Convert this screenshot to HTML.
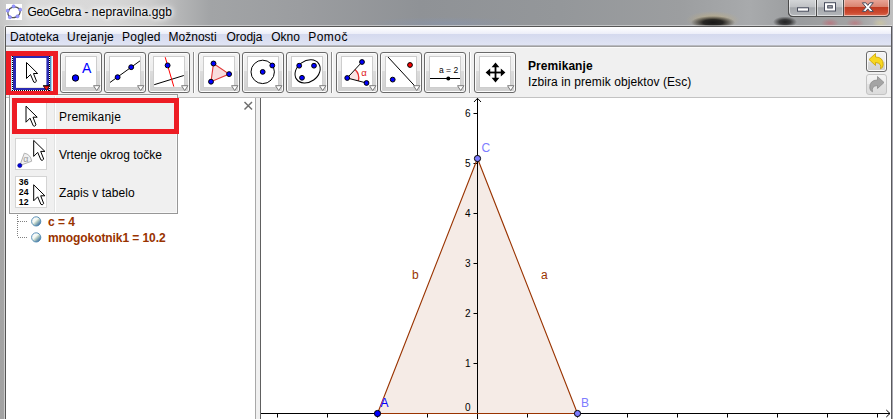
<!DOCTYPE html>
<html><head><meta charset="utf-8">
<style>
html,body{margin:0;padding:0;}
body{width:893px;height:419px;overflow:hidden;position:relative;background:#9a9c9e;font-family:"Liberation Sans",sans-serif;font-size:12px;color:#000;}
.abs{position:absolute;}
#title{left:0;top:0;width:893px;height:27px;background:
radial-gradient(ellipse 22px 6.5px at 713px 22.5px, rgba(16,16,16,0.95) 0, rgba(16,16,16,0.85) 45%, rgba(16,16,16,0) 100%),
radial-gradient(ellipse 27px 9px at 713px 20px, rgba(196,176,124,0.65) 0, rgba(196,176,124,0.4) 50%, rgba(196,176,124,0) 100%),
radial-gradient(ellipse 12px 5.5px at 785px 22px, rgba(24,24,24,0.92) 0, rgba(24,24,24,0.75) 45%, rgba(24,24,24,0) 100%),
radial-gradient(ellipse 9px 4.5px at 830px 23px, rgba(196,96,110,0.6) 0, rgba(196,96,110,0) 100%),
radial-gradient(ellipse 9px 4.5px at 855px 23px, rgba(200,100,110,0.55) 0, rgba(200,100,110,0) 100%),
radial-gradient(ellipse 8px 5px at 880px 23px, rgba(220,210,150,0.5) 0, rgba(220,210,150,0) 100%),
radial-gradient(ellipse 80px 6px at 445px 23px, rgba(130,150,190,0.35) 0, rgba(130,150,190,0) 100%),
linear-gradient(90deg,#c6c6c6 0px,#dadada 30px,#d8d8d8 110px,#cccccc 150px,#b4b5b6 180px,#a2a4a6 210px,#9b9da0 300px,#8f9296 420px,#94979a 560px,#9c9ea0 680px,#a8aaac 750px,#9a9c9e 800px,#a4a4a4 860px,#c0c0c0 893px);}
#titletxt{left:27.4px;top:4px;font-size:12px;line-height:16px;white-space:nowrap;color:#000;text-shadow:0 0 4px #fff,0 0 6px #fff,0 0 8px #fff;}
#lframe{left:0;top:26px;width:5px;height:393px;background:linear-gradient(90deg,rgba(0,0,0,0) 0,rgba(0,0,0,0) 3.6px,rgba(255,255,255,0.45) 4px,rgba(255,255,255,0.45) 5px),linear-gradient(180deg,#c4c4c4 0,#bcbcbc 40px,#b2b2b2 110px,#a6a6a6 220px,#a2a2a2 393px);}
#frameline{left:5px;top:26px;width:887px;height:393px;border:1px solid #555;border-bottom:none;border-radius:2px 2px 0 0;box-sizing:border-box;}
#menubar{left:6px;top:27px;width:885px;height:21px;background:linear-gradient(180deg,#ffffff 0px,#eceef9 7px,#d4d9ee 7px,#e0e4f4 18px,#c4c6d0 18px,#a0a0a0 19.5px,#f8f8f8 20px,#fdfdfd 21px);}
.mi{position:absolute;top:29px;line-height:16px;white-space:nowrap;}
#toolbar{left:6px;top:48px;width:885px;height:49px;background:#f0f0f0;}
#tbline{left:6px;top:97px;width:885px;height:1px;background:#c2c2c2;}
.tb{position:absolute;top:52px;width:40px;height:39px;border:1px solid #6a6a6a;border-radius:3px;background:linear-gradient(180deg,#f3f3f3 0,#ececec 46%,#dcdcdc 46%,#d0d0d0 100%);box-shadow:inset 0 0 0 1px #fcfcfc;}
.tb svg.ic{position:absolute;left:4px;top:3px;width:32px;height:32px;background:#fff;outline:1px solid #cdcdcd;outline-offset:-1px;}
.tb svg.dd{position:absolute;left:32px;top:32px;}
.sep{position:absolute;top:52px;width:1px;height:41px;background:#8c8c8c;box-shadow:1px 0 0 #fff;}
#stat1{left:528px;top:59px;font-weight:bold;letter-spacing:0.06px;line-height:14px;white-space:nowrap;}
#stat2{left:528px;top:75px;letter-spacing:0.085px;line-height:14px;white-space:nowrap;}
.ur{position:absolute;left:866px;width:19px;height:19px;border-radius:3px;}
#alg{left:6px;top:98px;width:249px;height:321px;background:#fff;}
#algr{left:255px;top:98px;width:1px;height:321px;background:#a8a8a8;}
#split{left:256px;top:98px;width:4px;height:321px;background:#f0f0f0;}
#splitd{left:260px;top:98px;width:1px;height:321px;background:#606060;}
#canvas{left:261px;top:98px;width:630px;height:321px;background:#fff;}
.tr{position:absolute;left:48px;font-weight:bold;color:#993300;line-height:14px;white-space:nowrap;}
#popup{left:9px;top:94px;width:167px;height:118px;background:#f0f0f0;border:1px solid #979797;box-shadow:inset 0 0 0 1px #f8f8f8;}
#gut{left:54px;top:96px;width:1px;height:116px;background:#e2e3e3;box-shadow:1px 0 0 #fff;}
.pic{position:absolute;left:15px;width:30px;height:30px;border:1px solid #d4d4d4;background:#fff;}
.ptx{position:absolute;left:59px;line-height:14px;white-space:nowrap;}
.red{position:absolute;border:5px solid #ed1c24;box-sizing:border-box;}
</style></head><body>
<div id="title" class="abs"></div>
<div id="lframe" class="abs"></div>
<div id="titletxt" class="abs"><span style="letter-spacing:-0.28px">GeoGebra</span> - <span style="letter-spacing:0.1px">nepravilna.ggb</span></div>

<svg class="abs" style="left:6px;top:4px" width="16" height="16" viewBox="0 0 16 16"><rect width="16" height="16" fill="#fff"/><ellipse cx="8" cy="8.3" rx="6.3" ry="5.2" transform="rotate(-20 8 8.3)" fill="none" stroke="#555" stroke-width="1.3"/><g fill="#9999ff" stroke="#6f6fe0" stroke-width="0.5"><circle cx="7.6" cy="2.4" r="1.6"/><circle cx="14.2" cy="5.7" r="1.6"/><circle cx="11.5" cy="12.3" r="1.6"/><circle cx="3.9" cy="13.2" r="1.6"/><circle cx="1.7" cy="6.7" r="1.6"/></g></svg>
<svg class="abs" style="left:786px;top:0" width="106" height="19" viewBox="0 0 106 19">
<defs>
<linearGradient id="wg" x1="0" y1="0" x2="0" y2="1"><stop offset="0" stop-color="#d6d8da"/><stop offset="0.45" stop-color="#c0c2c5"/><stop offset="0.5" stop-color="#a4a7ab"/><stop offset="1" stop-color="#b4b7bb"/></linearGradient>
<linearGradient id="wr" x1="0" y1="0" x2="0" y2="1"><stop offset="0" stop-color="#eaa99b"/><stop offset="0.45" stop-color="#da8470"/><stop offset="0.5" stop-color="#c03a20"/><stop offset="0.8" stop-color="#cc4a30"/><stop offset="1" stop-color="#da6c52"/></linearGradient>
</defs>
<path d="M2.5,-1 L2.5,12 Q2.5,16.5 7,16.5 L99,16.5 Q103.5,16.5 103.5,12 L103.5,-1 Z" fill="url(#wg)" stroke="#4a4a4a" stroke-width="1"/>
<path d="M57.5,-1 L57.5,16 L99,16 Q103,16 103,12 L103,-1 Z" fill="url(#wr)"/>
<path d="M2.5,-1 L2.5,12 Q2.5,16.5 7,16.5 L99,16.5 Q103.5,16.5 103.5,12 L103.5,-1" fill="none" stroke="#4a4a4a" stroke-width="1"/>
<path d="M3.5,0 L3.5,12 Q3.5,15.5 7,15.5 L99,15.5 Q102.5,15.5 102.5,12 L102.5,0" fill="none" stroke="rgba(255,255,255,0.55)" stroke-width="1"/>
<line x1="30.5" y1="0" x2="30.5" y2="16" stroke="#4a4a4a"/><line x1="57.5" y1="0" x2="57.5" y2="16" stroke="#4a4a4a"/>
<line x1="29.5" y1="0" x2="29.5" y2="15" stroke="rgba(255,255,255,0.5)"/><line x1="31.5" y1="0" x2="31.5" y2="15" stroke="rgba(255,255,255,0.5)"/><line x1="56.5" y1="0" x2="56.5" y2="15" stroke="rgba(255,255,255,0.5)"/><line x1="58.5" y1="0" x2="58.5" y2="15" stroke="rgba(255,255,255,0.4)"/>
<rect x="11.5" y="7.8" width="11" height="3.4" fill="#fff" stroke="#484c5c" stroke-width="1"/>
<rect x="38.5" y="2.7" width="11" height="8.3" fill="#fff" stroke="#484c5c" stroke-width="1"/><rect x="41.7" y="5.7" width="4.6" height="2.3" fill="#b0b2b6" stroke="#484c5c" stroke-width="1"/>
<path d="M76.3,2.8 L79.8,2.8 L81.8,5.4 L83.8,2.8 L87.3,2.8 L83.6,7.2 L87.3,11.4 L83.8,11.4 L81.8,8.9 L79.8,11.4 L76.3,11.4 L80,7.2 Z" fill="#fff" stroke="#484c5c" stroke-width="1"/>
</svg>
<div class="abs" style="left:5px;top:25px;width:887px;height:1px;background:rgba(255,255,255,0.42)"></div><div id="frameline" class="abs"></div>
<div id="menubar" class="abs"></div>
<div class="mi" style="left:10px;letter-spacing:0.13px">Datoteka</div>
<div class="mi" style="left:67px;letter-spacing:0.3px">Urejanje</div>
<div class="mi" style="left:122px;letter-spacing:0.23px">Pogled</div>
<div class="mi" style="left:168.6px;letter-spacing:0px">Možnosti</div>
<div class="mi" style="left:226.4px;letter-spacing:0px">Orodja</div>
<div class="mi" style="left:271.2px;letter-spacing:0px">Okno</div>
<div class="mi" style="left:308.2px;letter-spacing:0.5px">Pomoč</div>
<div id="toolbar" class="abs"></div><div id="tbline" class="abs"></div>
<svg class="abs" style="left:0;top:48px" width="64" height="50" viewBox="0 48 64 50" shape-rendering="crispEdges"><rect x="11" y="52" width="42" height="41" fill="#b4e0f6"/><rect x="50" y="52" width="1" height="41" fill="#4a90c4"/><rect x="51" y="52" width="1" height="41" fill="#a4d0ea"/><rect x="52" y="52" width="1" height="41" fill="#f2f8fc"/><rect x="13" y="54" width="36" height="36" fill="#2a2ab2"/><rect x="16" y="58" width="30.4" height="30" fill="#fff" shape-rendering="auto"/><rect x="16" y="87" width="30" height="1" fill="#ece6dc"/><rect x="12" y="54" width="1" height="1" fill="#000"/><rect x="12" y="55" width="1" height="1" fill="#fff"/><rect x="12" y="56" width="1" height="1" fill="#000"/><rect x="12" y="57" width="1" height="1" fill="#fff"/><rect x="12" y="58" width="1" height="1" fill="#000"/><rect x="12" y="59" width="1" height="1" fill="#fff"/><rect x="12" y="60" width="1" height="1" fill="#000"/><rect x="12" y="61" width="1" height="1" fill="#fff"/><rect x="12" y="62" width="1" height="1" fill="#000"/><rect x="12" y="63" width="1" height="1" fill="#fff"/><rect x="12" y="64" width="1" height="1" fill="#000"/><rect x="12" y="65" width="1" height="1" fill="#fff"/><rect x="12" y="66" width="1" height="1" fill="#000"/><rect x="12" y="67" width="1" height="1" fill="#fff"/><rect x="12" y="68" width="1" height="1" fill="#000"/><rect x="12" y="69" width="1" height="1" fill="#fff"/><rect x="12" y="70" width="1" height="1" fill="#000"/><rect x="12" y="71" width="1" height="1" fill="#fff"/><rect x="12" y="72" width="1" height="1" fill="#000"/><rect x="12" y="73" width="1" height="1" fill="#fff"/><rect x="12" y="74" width="1" height="1" fill="#000"/><rect x="12" y="75" width="1" height="1" fill="#fff"/><rect x="12" y="76" width="1" height="1" fill="#000"/><rect x="12" y="77" width="1" height="1" fill="#fff"/><rect x="12" y="78" width="1" height="1" fill="#000"/><rect x="12" y="79" width="1" height="1" fill="#fff"/><rect x="12" y="80" width="1" height="1" fill="#000"/><rect x="12" y="81" width="1" height="1" fill="#fff"/><rect x="12" y="82" width="1" height="1" fill="#000"/><rect x="12" y="83" width="1" height="1" fill="#fff"/><rect x="12" y="84" width="1" height="1" fill="#000"/><rect x="12" y="85" width="1" height="1" fill="#fff"/><rect x="12" y="86" width="1" height="1" fill="#000"/><rect x="12" y="87" width="1" height="1" fill="#fff"/><rect x="12" y="88" width="1" height="1" fill="#000"/><rect x="12" y="89" width="1" height="1" fill="#fff"/><rect x="12" y="90" width="1" height="1" fill="#000"/><rect x="49" y="54" width="1" height="1" fill="#000"/><rect x="49" y="55" width="1" height="1" fill="#fff"/><rect x="49" y="56" width="1" height="1" fill="#000"/><rect x="49" y="57" width="1" height="1" fill="#fff"/><rect x="49" y="58" width="1" height="1" fill="#000"/><rect x="49" y="59" width="1" height="1" fill="#fff"/><rect x="49" y="60" width="1" height="1" fill="#000"/><rect x="49" y="61" width="1" height="1" fill="#fff"/><rect x="49" y="62" width="1" height="1" fill="#000"/><rect x="49" y="63" width="1" height="1" fill="#fff"/><rect x="49" y="64" width="1" height="1" fill="#000"/><rect x="49" y="65" width="1" height="1" fill="#fff"/><rect x="49" y="66" width="1" height="1" fill="#000"/><rect x="49" y="67" width="1" height="1" fill="#fff"/><rect x="49" y="68" width="1" height="1" fill="#000"/><rect x="49" y="69" width="1" height="1" fill="#fff"/><rect x="49" y="70" width="1" height="1" fill="#000"/><rect x="49" y="71" width="1" height="1" fill="#fff"/><rect x="49" y="72" width="1" height="1" fill="#000"/><rect x="49" y="73" width="1" height="1" fill="#fff"/><rect x="49" y="74" width="1" height="1" fill="#000"/><rect x="49" y="75" width="1" height="1" fill="#fff"/><rect x="49" y="76" width="1" height="1" fill="#000"/><rect x="49" y="77" width="1" height="1" fill="#fff"/><rect x="49" y="78" width="1" height="1" fill="#000"/><rect x="49" y="79" width="1" height="1" fill="#fff"/><rect x="49" y="80" width="1" height="1" fill="#000"/><rect x="49" y="81" width="1" height="1" fill="#fff"/><rect x="49" y="82" width="1" height="1" fill="#000"/><rect x="49" y="83" width="1" height="1" fill="#fff"/><rect x="49" y="84" width="1" height="1" fill="#000"/><rect x="49" y="85" width="1" height="1" fill="#fff"/><rect x="49" y="86" width="1" height="1" fill="#000"/><rect x="49" y="87" width="1" height="1" fill="#fff"/><rect x="49" y="88" width="1" height="1" fill="#000"/><rect x="49" y="89" width="1" height="1" fill="#fff"/><rect x="49" y="90" width="1" height="1" fill="#000"/><rect x="13" y="90" width="1" height="1" fill="#fff"/><rect x="14" y="90" width="1" height="1" fill="#000"/><rect x="15" y="90" width="1" height="1" fill="#fff"/><rect x="16" y="90" width="1" height="1" fill="#000"/><rect x="17" y="90" width="1" height="1" fill="#fff"/><rect x="18" y="90" width="1" height="1" fill="#000"/><rect x="19" y="90" width="1" height="1" fill="#fff"/><rect x="20" y="90" width="1" height="1" fill="#000"/><rect x="21" y="90" width="1" height="1" fill="#fff"/><rect x="22" y="90" width="1" height="1" fill="#000"/><rect x="23" y="90" width="1" height="1" fill="#fff"/><rect x="24" y="90" width="1" height="1" fill="#000"/><rect x="25" y="90" width="1" height="1" fill="#fff"/><rect x="26" y="90" width="1" height="1" fill="#000"/><rect x="27" y="90" width="1" height="1" fill="#fff"/><rect x="28" y="90" width="1" height="1" fill="#000"/><rect x="29" y="90" width="1" height="1" fill="#fff"/><rect x="30" y="90" width="1" height="1" fill="#000"/><rect x="31" y="90" width="1" height="1" fill="#fff"/><rect x="32" y="90" width="1" height="1" fill="#000"/><rect x="33" y="90" width="1" height="1" fill="#fff"/><rect x="34" y="90" width="1" height="1" fill="#000"/><rect x="35" y="90" width="1" height="1" fill="#fff"/><rect x="36" y="90" width="1" height="1" fill="#000"/><rect x="37" y="90" width="1" height="1" fill="#fff"/><rect x="38" y="90" width="1" height="1" fill="#000"/><rect x="39" y="90" width="1" height="1" fill="#fff"/><rect x="40" y="90" width="1" height="1" fill="#000"/><rect x="41" y="90" width="1" height="1" fill="#fff"/><rect x="42" y="90" width="1" height="1" fill="#000"/><rect x="43" y="90" width="1" height="1" fill="#fff"/><rect x="44" y="90" width="1" height="1" fill="#000"/><rect x="45" y="90" width="1" height="1" fill="#fff"/><rect x="46" y="90" width="1" height="1" fill="#000"/><rect x="47" y="90" width="1" height="1" fill="#fff"/><rect x="48" y="90" width="1" height="1" fill="#000"/></svg>
<svg class="abs" style="left:0;top:48px" width="64" height="50" viewBox="0 48 64 50"><path d="M0,0 L0,16 L4,12 L7.2,19.5 L8.5,20 L10,18.7 L7,11 L11.2,11 Z" transform="translate(26.5,62.5)" fill="#fff" stroke="#000" stroke-width="1.0" stroke-linejoin="miter"/><path d="M43.4,85.9 L49.6,85.9 L46.5,90.6 Z" fill="#f01010" stroke="#300" stroke-width="0.7"/><line x1="43" y1="85.7" x2="50" y2="85.7" stroke="#000" stroke-width="0.9"/></svg>
<div class="tb" style="left:60px"><svg class="ic" viewBox="0 0 32 32"><circle cx="10.5" cy="22" r="3.2" fill="#0000ff" stroke="#000" stroke-width="1"/><text x="17" y="16.5" font-size="14" fill="#0000ff" font-family="Liberation Sans">A</text></svg><svg class="dd" width="8" height="6" viewBox="0 0 8 6"><path d="M0.5,0.7 L6.9,0.7 L3.7,5.6 Z" fill="#fff" stroke="#7a7a7a" stroke-width="1"/></svg></div>
<div class="tb" style="left:104px"><svg class="ic" viewBox="0 0 32 32"><line x1="0.7" y1="26.7" x2="31.1" y2="4.8" stroke="#000" stroke-width="1"/><circle cx="8.6" cy="21.2" r="2.45" fill="#0000ff" stroke="#000" stroke-width="1"/><circle cx="22.2" cy="11.2" r="2.45" fill="#0000ff" stroke="#000" stroke-width="1"/></svg><svg class="dd" width="8" height="6" viewBox="0 0 8 6"><path d="M0.5,0.7 L6.9,0.7 L3.7,5.6 Z" fill="#fff" stroke="#7a7a7a" stroke-width="1"/></svg></div>
<div class="tb" style="left:148px"><svg class="ic" viewBox="0 0 32 32"><line x1="1.2" y1="28.7" x2="30.8" y2="19.5" stroke="#000" stroke-width="1"/><line x1="12.2" y1="1.2" x2="20.8" y2="30.6" stroke="#ff0000" stroke-width="1"/><circle cx="14.6" cy="9.4" r="2.45" fill="#0000ff" stroke="#000" stroke-width="1"/></svg><svg class="dd" width="8" height="6" viewBox="0 0 8 6"><path d="M0.5,0.7 L6.9,0.7 L3.7,5.6 Z" fill="#fff" stroke="#7a7a7a" stroke-width="1"/></svg></div>
<div class="tb" style="left:198px"><svg class="ic" viewBox="0 0 32 32"><polygon points="10.5,7.5 26.1,18.1 8,25.7" fill="#f8dcdc" stroke="#e03838" stroke-width="1.1"/><circle cx="10.5" cy="7.5" r="2.45" fill="#0000ff" stroke="#000" stroke-width="1"/><circle cx="26.1" cy="18.1" r="2.45" fill="#0000ff" stroke="#000" stroke-width="1"/><circle cx="8" cy="25.7" r="2.45" fill="#0000ff" stroke="#000" stroke-width="1"/></svg><svg class="dd" width="8" height="6" viewBox="0 0 8 6"><path d="M0.5,0.7 L6.9,0.7 L3.7,5.6 Z" fill="#fff" stroke="#7a7a7a" stroke-width="1"/></svg></div>
<div class="tb" style="left:242px"><svg class="ic" viewBox="0 0 32 32"><circle cx="15.7" cy="15.9" r="11.7" fill="none" stroke="#000" stroke-width="1"/><circle cx="15.7" cy="15.9" r="2.4" fill="#0000ff" stroke="#000" stroke-width="1"/><circle cx="25.3" cy="9.5" r="2.4" fill="#0000ff" stroke="#000" stroke-width="1"/></svg><svg class="dd" width="8" height="6" viewBox="0 0 8 6"><path d="M0.5,0.7 L6.9,0.7 L3.7,5.6 Z" fill="#fff" stroke="#7a7a7a" stroke-width="1"/></svg></div>
<div class="tb" style="left:286px"><svg class="ic" viewBox="0 0 32 32"><ellipse cx="16.6" cy="15.4" rx="13.5" ry="10.5" transform="rotate(-35 16.6 15.4)" fill="none" stroke="#000" stroke-width="1"/><circle cx="8.2" cy="9.7" r="2.4" fill="#0000ff" stroke="#000" stroke-width="1"/><circle cx="23" cy="9.7" r="2.4" fill="#0000ff" stroke="#000" stroke-width="1"/><circle cx="11" cy="21.8" r="2.4" fill="#0000ff" stroke="#000" stroke-width="1"/></svg><svg class="dd" width="8" height="6" viewBox="0 0 8 6"><path d="M0.5,0.7 L6.9,0.7 L3.7,5.6 Z" fill="#fff" stroke="#7a7a7a" stroke-width="1"/></svg></div>
<div class="tb" style="left:336px"><svg class="ic" viewBox="0 0 32 32"><path d="M6.2,22 L14.0,13.56 A11.5,11.5 0 0 1 17.33,24.89 Z" fill="#fbe4e4" stroke="none"/><path d="M14.0,13.56 A11.5,11.5 0 0 1 17.33,24.89" fill="none" stroke="#e83030" stroke-width="1.3"/><line x1="6.2" y1="22" x2="21" y2="6" stroke="#000" stroke-width="1"/><line x1="6.2" y1="22" x2="25.5" y2="27" stroke="#000" stroke-width="1"/><circle cx="21" cy="6" r="2.4" fill="#0000ff" stroke="#000" stroke-width="1"/><circle cx="6.2" cy="22" r="2.4" fill="#0000ff" stroke="#000" stroke-width="1"/><circle cx="25.5" cy="27" r="2.4" fill="#0000ff" stroke="#000" stroke-width="1"/><text x="20.2" y="20.3" font-size="9.5" fill="#e02020" font-family="Liberation Sans">α</text></svg><svg class="dd" width="8" height="6" viewBox="0 0 8 6"><path d="M0.5,0.7 L6.9,0.7 L3.7,5.6 Z" fill="#fff" stroke="#7a7a7a" stroke-width="1"/></svg></div>
<div class="tb" style="left:380px"><svg class="ic" viewBox="0 0 32 32"><line x1="2.8" y1="0.8" x2="31.2" y2="31.5" stroke="#000" stroke-width="1"/><circle cx="25" cy="9" r="2.4" fill="#ff0000" stroke="#000" stroke-width="1"/><circle cx="7.7" cy="23.6" r="2.4" fill="#0000ff" stroke="#000" stroke-width="1"/></svg><svg class="dd" width="8" height="6" viewBox="0 0 8 6"><path d="M0.5,0.7 L6.9,0.7 L3.7,5.6 Z" fill="#fff" stroke="#7a7a7a" stroke-width="1"/></svg></div>
<div class="tb" style="left:424px"><svg class="ic" viewBox="0 0 32 32"><text x="10" y="16.8" font-size="8.5" fill="#000" font-family="Liberation Sans">a = 2</text><line x1="0.7" y1="22.5" x2="31.6" y2="22.5" stroke="#000" stroke-width="1"/><circle cx="19.3" cy="22.5" r="2" fill="#000"/></svg><svg class="dd" width="8" height="6" viewBox="0 0 8 6"><path d="M0.5,0.7 L6.9,0.7 L3.7,5.6 Z" fill="#fff" stroke="#7a7a7a" stroke-width="1"/></svg></div>
<div class="tb" style="left:474px"><svg class="ic" viewBox="0 0 32 32"><g stroke="#000" stroke-width="1.8" fill="#000"><line x1="16.5" y1="8" x2="16.5" y2="25"/><line x1="8" y1="16.5" x2="25" y2="16.5"/><path d="M16.5,6.6 L12.6,11.2 L20.4,11.2 Z M16.5,26.4 L12.6,21.8 L20.4,21.8 Z M6.6,16.5 L11.2,12.6 L11.2,20.4 Z M26.4,16.5 L21.8,12.6 L21.8,20.4 Z" stroke="none"/></g></svg><svg class="dd" width="8" height="6" viewBox="0 0 8 6"><path d="M0.5,0.7 L6.9,0.7 L3.7,5.6 Z" fill="#fff" stroke="#7a7a7a" stroke-width="1"/></svg></div>
<div class="sep" style="left:193px"></div>
<div class="sep" style="left:331px"></div>
<div class="sep" style="left:469px"></div>
<div id="stat1" class="abs">Premikanje</div><div id="stat2" class="abs">Izbira in premik objektov (Esc)</div>
<div class="ur" style="top:51px;border:1px solid #6a6a6a;background:linear-gradient(180deg,#f4f4f4 0,#ececec 50%,#dcdcdc 50%,#d0d0d0 100%);box-shadow:inset 0 0 0 1px #fafafa"></div>
<div class="ur" style="top:74px;border:1px solid #c4c4c4;background:linear-gradient(180deg,#f4f4f4 0,#ececec 50%,#e2e2e2 50%,#dcdcdc 100%);"></div>
<svg class="abs" style="left:866px;top:51px" width="21" height="21" viewBox="0 0 21 21"><path d="M3,8.5 L9.5,2.5 L9.5,6 Q17.5,6 17.2,14 Q17,17 14.5,17.8 Q16,12 9.5,11.5 L9.5,14.5 Z" fill="#f8d820" stroke="#c8a000" stroke-width="0.8" stroke-linejoin="round"/></svg>
<svg class="abs" style="left:866px;top:74px" width="21" height="21" viewBox="0 0 21 21"><path d="M18,8.5 L11.5,2.5 L11.5,6 Q3.5,6 3.8,14 Q4,17 6.5,17.8 Q5,12 11.5,11.5 L11.5,14.5 Z" fill="#a4a4a4" stroke="#8c8c8c" stroke-width="0.8" stroke-linejoin="round"/></svg>
<div id="alg" class="abs"></div><div id="algr" class="abs"></div><div id="split" class="abs"></div><div id="splitd" class="abs"></div><div id="canvas" class="abs"></div>
<svg class="abs" style="left:243px;top:100px" width="11" height="11" viewBox="0 0 11 11"><path d="M1.5,2 L9,9.5 M9,2 L1.5,9.5" stroke="#6e6e6e" stroke-width="1.45" fill="none"/></svg>
<svg class="abs" style="left:6px;top:205px" width="60" height="45" viewBox="0 0 60 45">
<defs><linearGradient id="sph" x1="0.12" y1="0.12" x2="0.88" y2="0.88"><stop offset="0" stop-color="#ffffff"/><stop offset="0.4" stop-color="#f2f7f2"/><stop offset="0.55" stop-color="#c0d4c8"/><stop offset="0.72" stop-color="#84a8b8"/><stop offset="1" stop-color="#3c6c9c"/></linearGradient></defs>
<g stroke="#808080" stroke-width="1" stroke-dasharray="1 1"><line x1="11.5" y1="8" x2="11.5" y2="32"/><line x1="12" y1="16.5" x2="21" y2="16.5"/><line x1="12" y1="32.5" x2="21" y2="32.5"/></g>
<circle cx="30.2" cy="16.4" r="4.6" fill="url(#sph)" stroke="#4a86b0" stroke-width="0.9"/>
<circle cx="30.2" cy="32.4" r="4.6" fill="url(#sph)" stroke="#4a86b0" stroke-width="0.9"/>
</svg>
<div class="tr" style="top:215px">c = 4</div><div class="tr" style="top:231px;letter-spacing:-0.08px">mnogokotnik1 = 10.2</div>
<svg class="abs" style="left:261px;top:98px;font-family:'Liberation Sans',sans-serif" width="630" height="321" viewBox="0 0 630 321"><polygon points="116.5,315.5 316.5,315.5 216.5,60.5" fill="#f5ebe6" stroke="none"/><line x1="0" y1="315.5" x2="629" y2="315.5" stroke="#000" stroke-width="1"/><line x1="216.5" y1="0.5" x2="216.5" y2="321" stroke="#000" stroke-width="1"/><path d="M213,4 L216.5,0.29999999999999716 L220,4" fill="none" stroke="#000" stroke-width="1"/><path d="M625.3,312 L629,315.5 L625.3,319" fill="none" stroke="#000" stroke-width="1"/><line x1="16.5" y1="315.5" x2="16.5" y2="319.5" stroke="#000" stroke-width="1"/><line x1="66.5" y1="315.5" x2="66.5" y2="319.5" stroke="#000" stroke-width="1"/><line x1="116.5" y1="315.5" x2="116.5" y2="319.5" stroke="#000" stroke-width="1"/><line x1="166.5" y1="315.5" x2="166.5" y2="319.5" stroke="#000" stroke-width="1"/><line x1="266.5" y1="315.5" x2="266.5" y2="319.5" stroke="#000" stroke-width="1"/><line x1="316.5" y1="315.5" x2="316.5" y2="319.5" stroke="#000" stroke-width="1"/><line x1="366.5" y1="315.5" x2="366.5" y2="319.5" stroke="#000" stroke-width="1"/><line x1="416.5" y1="315.5" x2="416.5" y2="319.5" stroke="#000" stroke-width="1"/><line x1="466.5" y1="315.5" x2="466.5" y2="319.5" stroke="#000" stroke-width="1"/><line x1="516.5" y1="315.5" x2="516.5" y2="319.5" stroke="#000" stroke-width="1"/><line x1="566.5" y1="315.5" x2="566.5" y2="319.5" stroke="#000" stroke-width="1"/><line x1="616.5" y1="315.5" x2="616.5" y2="319.5" stroke="#000" stroke-width="1"/><line x1="212.5" y1="265.5" x2="216.5" y2="265.5" stroke="#000" stroke-width="1"/><text x="209.5" y="269.1" font-size="10" text-anchor="end" fill="#000">1</text><line x1="212.5" y1="215.5" x2="216.5" y2="215.5" stroke="#000" stroke-width="1"/><text x="209.5" y="219.10000000000002" font-size="10" text-anchor="end" fill="#000">2</text><line x1="212.5" y1="165.5" x2="216.5" y2="165.5" stroke="#000" stroke-width="1"/><text x="209.5" y="169.10000000000002" font-size="10" text-anchor="end" fill="#000">3</text><line x1="212.5" y1="115.5" x2="216.5" y2="115.5" stroke="#000" stroke-width="1"/><text x="209.5" y="119.1" font-size="10" text-anchor="end" fill="#000">4</text><line x1="212.5" y1="65.5" x2="216.5" y2="65.5" stroke="#000" stroke-width="1"/><text x="209.5" y="69.1" font-size="10" text-anchor="end" fill="#000">5</text><line x1="212.5" y1="15.5" x2="216.5" y2="15.5" stroke="#000" stroke-width="1"/><text x="209.5" y="19.099999999999994" font-size="10" text-anchor="end" fill="#000">6</text><text x="209.5" y="313" font-size="10" text-anchor="end" fill="#000">0</text><polygon points="116.5,315.5 316.5,315.5 216.5,60.5" fill="none" stroke="#993300" stroke-width="1.1" stroke-linejoin="round"/><text x="151" y="181" font-size="12" fill="#993300">b</text><text x="280" y="181" font-size="12" fill="#993300">a</text><circle cx="116.5" cy="315.5" r="3.1" fill="#0000ff" stroke="#000" stroke-width="1"/><circle cx="316.5" cy="315.5" r="3.1" fill="#7d7dff" stroke="#000" stroke-width="1"/><circle cx="216.5" cy="60.5" r="3.1" fill="#7d7dff" stroke="#000" stroke-width="1"/><text x="119.5" y="309" font-size="12" fill="#0000ff">A</text><text x="320" y="309" font-size="12" fill="#7d7dff">B</text><text x="220.5" y="54" font-size="12" fill="#7d7dff">C</text></svg>
<div class="abs" style="left:891px;top:26px;width:1px;height:393px;background:#5a5a5e"></div><div class="abs" style="left:892px;top:26px;width:1px;height:393px;background:#a8a8b0"></div>
<div id="popup" class="abs"></div><div id="gut" class="abs"></div>
<div class="pic" style="top:100px"></div><div class="pic" style="top:138px"></div><div class="pic" style="top:176px"></div>
<svg class="abs" style="left:15px;top:100px" width="32" height="32" viewBox="0 0 32 32"><path d="M0,0 L0,16 L4,12 L7.2,19.5 L8.5,20 L10,18.7 L7,11 L11.2,11 Z" transform="translate(11,6.2)" fill="#fff" stroke="#000" stroke-width="1.0" stroke-linejoin="miter"/></svg>
<svg class="abs" style="left:15px;top:138px;font-family:'Liberation Sans',sans-serif" width="32" height="32" viewBox="0 0 32 32"><path d="M4.8,27.5 L9.3,15.2 Q15.5,16.2 16.7,23.2 Z" fill="#f0f0f0" stroke="#b2b2b2" stroke-width="1"/><text x="8.3" y="24.3" font-size="9" fill="#9a9a9a">α</text><circle cx="4.8" cy="27.5" r="2.1" fill="#0000e0" stroke="#000070" stroke-width="0.6"/><path d="M0,0 L0,16 L4,12 L7.2,19.5 L8.5,20 L10,18.7 L7,11 L11.2,11 Z" transform="translate(18.7,2.4)" fill="#fff" stroke="#000" stroke-width="1.0" stroke-linejoin="miter"/></svg>
<svg class="abs" style="left:15px;top:176px;font-family:'Liberation Sans',sans-serif" width="32" height="32" viewBox="0 0 32 32"><g font-size="8.7" font-weight="bold" fill="#000"><text x="3.8" y="9.2">36</text><text x="3.8" y="19.3">24</text><text x="3.8" y="29.1">12</text></g><path d="M0,0 L0,16 L4,12 L7.2,19.5 L8.5,20 L10,18.7 L7,11 L11.2,11 Z" transform="translate(18.7,8.8)" fill="#fff" stroke="#000" stroke-width="1.0" stroke-linejoin="miter"/></svg>
<div class="ptx" style="top:110px;letter-spacing:0.2px">Premikanje</div><div class="ptx" style="top:148px">Vrtenje okrog točke</div><div class="ptx" style="top:186px;letter-spacing:0.08px">Zapis v tabelo</div>
<div class="red" style="left:6px;top:51px;width:52px;height:44px;border-width:5px 5px 4px 5px"></div>
<div class="red" style="left:12px;top:98px;width:167px;height:36px;border-width:5px"></div>
</body></html>
